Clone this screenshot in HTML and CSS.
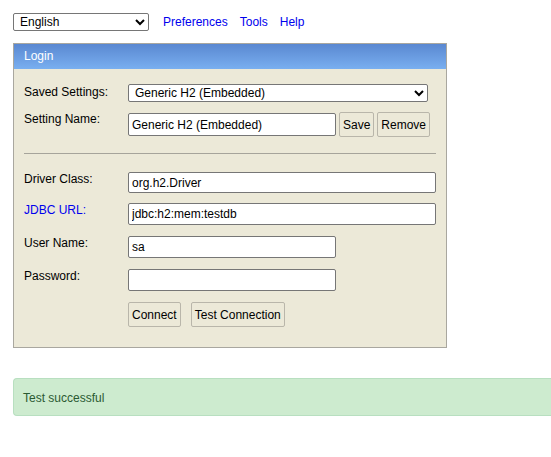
FILE: index.html
```html
<!DOCTYPE html>
<html>
<head>
<meta charset="utf-8">
<title>H2 Console</title>
<link rel="stylesheet" href="styles.css">
</head>
<body>
<div class="topbar">
  <select class="lang"><option>English</option></select>
  <nav class="links">
    <a href="#">Preferences</a>
    <a href="#">Tools</a>
    <a href="#">Help</a>
  </nav>
</div>

<div class="panel">
  <div class="panel-head">Login</div>
  <div class="panel-body">
    <div class="row row-saved">
      <label class="lbl">Saved Settings:</label>
      <select class="saved"><option>Generic H2 (Embedded)</option></select>
    </div>
    <div class="row row-name">
      <label class="lbl">Setting Name:</label>
      <div class="ctl">
        <input class="field short" type="text" value="Generic H2 (Embedded)">
        <button class="btn">Save</button>
        <button class="btn">Remove</button>
      </div>
    </div>
    <hr class="sep">
    <div class="row row-driver">
      <label class="lbl">Driver Class:</label>
      <input class="field long h21" type="text" value="org.h2.Driver">
    </div>
    <div class="row row-gap10">
      <label class="lbl link-lbl">JDBC URL:</label>
      <input class="field long" type="text" value="jdbc:h2:mem:testdb">
    </div>
    <div class="row row-gap11">
      <label class="lbl">User Name:</label>
      <input class="field short" type="text" value="sa">
    </div>
    <div class="row row-gap11">
      <label class="lbl">Password:</label>
      <input class="field short" type="password" value="">
    </div>
    <div class="row row-gap11">
      <span class="lbl"></span>
      <div class="ctl actions">
        <button class="btn">Connect</button>
        <button class="btn">Test Connection</button>
      </div>
    </div>
  </div>
</div>

<div class="message">Test successful</div>
</body>
</html>
```

FILE: styles.css
```css
body {
  margin: 0;
  padding: 13px 0 0 13px;
  font-family: "Liberation Sans", Arial, sans-serif;
  font-size: 12px;
  line-height: 14px;
  color: #000;
  background: #fff;
}

.topbar {
  display: flex;
  align-items: center;
  height: 18px;
}

.lang {
  width: 136px;
  height: 18px;
  font-family: "Liberation Sans", Arial, sans-serif;
  font-size: 12px;
  border: 1px solid #767676;
  border-radius: 2px;
  background: #fff;
  color: #000;
  padding: 0 0 0 2px;
  box-sizing: border-box;
}

.links {
  display: flex;
  gap: 12px;
  margin-left: 14px;
}

.links a {
  color: #0000ee;
  text-decoration: none;
}

.panel {
  margin-top: 12px;
  width: 434px;
  box-sizing: border-box;
  border: 1px solid #a9a79f;
  background: #ece9d8;
}

.panel-head {
  height: 25px;
  line-height: 25px;
  padding-left: 10px;
  color: #fff;
  background: linear-gradient(to bottom, #5a88d1, #79aff0);
}

.panel-body {
  padding: 15px 10px 20px 10px;
}

.row {
  display: grid;
  grid-template-columns: 104px 1fr;
  align-items: start;
}

.lbl {
  padding-top: 0;
}

.row-saved .lbl {
  padding-top: 1px;
}

.row-name {
  margin-top: 10px;
}

.row-driver {
  margin-top: 18px;
}

.row-gap10 {
  margin-top: 10px;
}

.row-gap11 {
  margin-top: 11px;
}

.link-lbl {
  color: #0000ee;
}

.ctl {
  display: flex;
  align-items: center;
  gap: 3px;
}

.actions {
  gap: 10px;
}

.saved {
  width: 300px;
  height: 18px;
  font-family: "Liberation Sans", Arial, sans-serif;
  font-size: 12px;
  border: 1px solid #767676;
  border-radius: 2px;
  background: #fff;
  color: #000;
  padding: 0 0 0 2px;
  box-sizing: border-box;
}

.field {
  height: 22px;
  box-sizing: border-box;
  border: 1px solid #767676;
  border-radius: 2px;
  background: #fff;
  padding: 0 3px;
  font-family: "Liberation Sans", Arial, sans-serif;
  font-size: 12px;
  color: #000;
  margin: 0;
}

.row-name .field {
  height: 23px;
}

.field.h21 {
  height: 21px;
}

.field.long {
  width: 308px;
}

.field.short {
  width: 208px;
}

.btn {
  height: 25px;
  box-sizing: border-box;
  padding: 0 3px;
  border: 1px solid #b9b6aa;
  border-radius: 2px;
  background: #ece9d8;
  font-family: "Liberation Sans", Arial, sans-serif;
  font-size: 12px;
  color: #000;
  margin: 0;
}

.sep {
  margin: 16px 0 0 0;
  border: 0;
  border-top: 1px solid #a6a49b;
  height: 0;
}

.message {
  margin-top: 30px;
  height: 38px;
  box-sizing: border-box;
  border: 1px solid #b8dfc0;
  border-right: 0;
  border-radius: 4px 0 0 4px;
  background: #cdebcf;
  color: #2b5a32;
  padding: 12px 9px 0 9px;
}
```
